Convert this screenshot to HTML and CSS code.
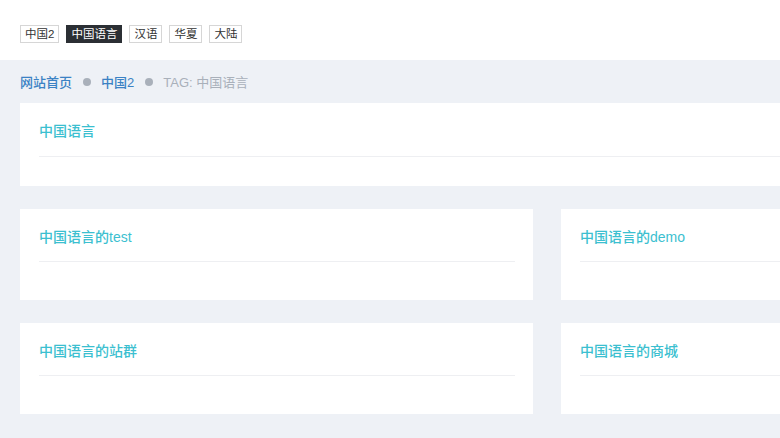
FILE: index.html
```html
<!DOCTYPE html>
<html lang="zh-CN">
<head>
    <meta charset="UTF-8">
    <meta name="viewport" content="width=device-width, initial-scale=1.0">
    <title>TAG: 中国语言</title>
    <link rel="stylesheet" href="styles.css">
</head>
<body>
    <!-- Tag list -->
    <div class="tags">
        <a class="tag" href="#">中国2</a>
        <a class="tag active" href="#">中国语言</a>
        <a class="tag" href="#">汉语</a>
        <a class="tag" href="#">华夏</a>
        <a class="tag" href="#">大陆</a>
    </div>

    <div class="main">
        <!-- Breadcrumb -->
        <div class="crumbs">
            <a href="#">网站首页</a>
            <span class="dot"></span>
            <a href="#">中国2</a>
            <span class="dot"></span>
            <span class="current">TAG: 中国语言</span>
        </div>

        <div class="card wide">
            <div class="card-head"><a href="#">中国语言</a></div>
            <div class="card-body"></div>
        </div>

        <div class="grid">
            <div class="card">
                <div class="card-head"><a href="#">中国语言的test</a></div>
                <div class="card-body"></div>
            </div>
            <div class="card">
                <div class="card-head"><a href="#">中国语言的demo</a></div>
                <div class="card-body"></div>
            </div>
            <div class="card">
                <div class="card-head"><a href="#">中国语言的站群</a></div>
                <div class="card-body"></div>
            </div>
            <div class="card">
                <div class="card-head"><a href="#">中国语言的商城</a></div>
                <div class="card-body"></div>
            </div>
        </div>
    </div>
</body>
</html>
```

FILE: styles.css
```css
/* General Styles */
body {
    margin: 0;
    font-family: "Liberation Sans", "Noto Sans CJK SC", sans-serif;
    background: #eef1f6;
    overflow: hidden;
}

a {
    text-decoration: none;
}

/* Tags */
.tags {
    display: flex;
    gap: 7px;
    padding: 25px 20px 17px;
    background: #fff;
}

.tag {
    padding: 0 4px;
    font-size: 11.5px;
    line-height: 16px;
    color: #333;
    border: 1px solid #d6d6d6;
}

.tag.active {
    background: #2b2f34;
    border-color: #2b2f34;
    color: #fff;
}

/* Main Area */
.main {
    width: 1054px;
    padding: 0 20px 24px;
}

/* Breadcrumb */
.crumbs {
    display: flex;
    align-items: center;
    height: 43px;
    font-size: 13px;
}

.crumbs a {
    color: #3b82c4;
    font-weight: 500;
}

.crumbs .current {
    color: #a9b0ba;
}

.dot {
    width: 8px;
    height: 8px;
    margin: 0 10px 0 11px;
    border-radius: 50%;
    background: #a9b0ba;
}

/* Cards */
.card {
    background: #fff;
    height: 91px;
    padding: 0 18px 0 19px;
    box-sizing: border-box;
}

.card.wide {
    height: 83px;
    margin-bottom: 23px;
}

.card-head {
    padding: 18px 0 14px;
    border-bottom: 1px solid #eeeff2;
    font-size: 14px;
    line-height: 20px;
}

.card.wide .card-head {
    padding-bottom: 15px;
}

.card-head a {
    color: #3cbfd0;
    font-weight: 500;
}

.grid {
    display: grid;
    grid-template-columns: 1fr 1fr;
    column-gap: 28px;
    row-gap: 23px;
}
```
